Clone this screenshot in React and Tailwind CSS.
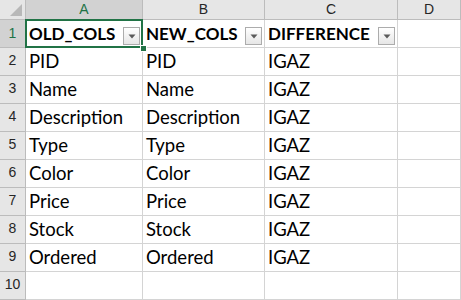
import React from "react";

const rows = [
  ["PID", "PID", "IGAZ"],
  ["Name", "Name", "IGAZ"],
  ["Description", "Description", "IGAZ"],
  ["Type", "Type", "IGAZ"],
  ["Color", "Color", "IGAZ"],
  ["Price", "Price", "IGAZ"],
  ["Stock", "Stock", "IGAZ"],
  ["Ordered", "Ordered", "IGAZ"],
];

function FilterBtn() {
  return (
    <div className="absolute right-[2px] bottom-[2px] w-[17px] h-[18px] border border-[#acacac] bg-gradient-to-b from-[#ffffff] to-[#e6e6e6] flex items-center justify-center">
      <svg width="8" height="5" viewBox="0 0 8 5">
        <polygon points="0.5,0.5 7.5,0.5 4,4.5" fill="#5a5a5a" />
      </svg>
    </div>
  );
}

const cols = "grid grid-cols-[26px_117px_122px_133px_63px]";
const cell = "h-[28px] border-r border-b border-[#d4d4d4] relative";
const font = { fontFamily: "Lato, 'Liberation Sans', sans-serif" };
const hdrFont = { fontFamily: "'Liberation Sans', sans-serif" };

export default function App() {
  return (
    <div className="w-[461px] h-[300px] bg-white overflow-hidden relative" style={font}>
      {/* column header */}
      <div className={cols}>
        <div className="h-[20px] bg-[#e6e6e6] border-r border-b border-[#bcbcbc] relative">
          <svg className="absolute right-[3px] bottom-[3px]" width="12" height="12" viewBox="0 0 12 12">
            <polygon points="12,0 12,12 0,12" fill="#b8b8b8" />
          </svg>
        </div>
        <div className="h-[20px] bg-[#d2d2d2] border-r border-b border-[#bcbcbc] flex items-center justify-center text-[14px] text-[#217346]" style={hdrFont}>A</div>
        <div className="h-[20px] bg-[#e6e6e6] border-r border-b border-[#bcbcbc] flex items-center justify-center text-[14px] text-[#262626]" style={hdrFont}>B</div>
        <div className="h-[20px] bg-[#e6e6e6] border-r border-b border-[#bcbcbc] flex items-center justify-center text-[14px] text-[#262626]" style={hdrFont}>C</div>
        <div className="h-[20px] bg-[#e6e6e6] border-r border-b border-[#bcbcbc] flex items-center justify-center text-[14px] text-[#262626]" style={hdrFont}>D</div>
      </div>
      {/* row 1 */}
      <div className={cols}>
        <div className="h-[28px] bg-[#d2d2d2] border-r border-b border-[#bcbcbc] flex items-end justify-center pb-[3px] text-[14px] text-[#217346]" style={hdrFont}>1</div>
        <div className={`${cell} flex items-end pl-[3px] pb-[5px] text-[17px] font-bold text-black leading-none`}>
          <span>OLD_COLS</span>
          <FilterBtn />
        </div>
        <div className={`${cell} flex items-end pl-[3px] pb-[5px] text-[17px] font-bold text-black leading-none`}>
          <span>NEW_COLS</span>
          <FilterBtn />
        </div>
        <div className={`${cell} flex items-end pl-[3px] pb-[5px] text-[17px] font-bold text-black leading-none`}>
          <span>DIFFERENCE</span>
          <FilterBtn />
        </div>
        <div className={cell}></div>
      </div>
      {rows.map((r, i) => (
        <div key={i} className={cols}>
          <div className="h-[28px] bg-[#e6e6e6] border-r border-b border-[#bcbcbc] flex items-end justify-center pb-[4px] text-[14px] text-[#262626]" style={hdrFont}>{i + 2}</div>
          {r.map((t, j) => (
            <div key={j} className={`${cell} flex items-end pl-[3px] pb-[5px] text-[18.5px] text-black leading-none`}>{t}</div>
          ))}
          <div className={cell}></div>
        </div>
      ))}
      <div className={cols}>
        <div className="h-[28px] bg-[#e6e6e6] border-r border-b border-[#bcbcbc] flex items-end justify-center pb-[4px] text-[14px] text-[#262626]" style={hdrFont}>10</div>
        <div className={cell}></div>
        <div className={cell}></div>
        <div className={cell}></div>
        <div className={cell}></div>
      </div>
      {/* selection box over A1 */}
      <div className="absolute left-[25px] top-[19px] w-[118px] h-[29px] border-2 border-[#217346] pointer-events-none" />
      <div className="absolute left-[140px] top-[45px] w-[5px] h-[5px] bg-[#217346] border border-white box-content" />
    </div>
  );
}
